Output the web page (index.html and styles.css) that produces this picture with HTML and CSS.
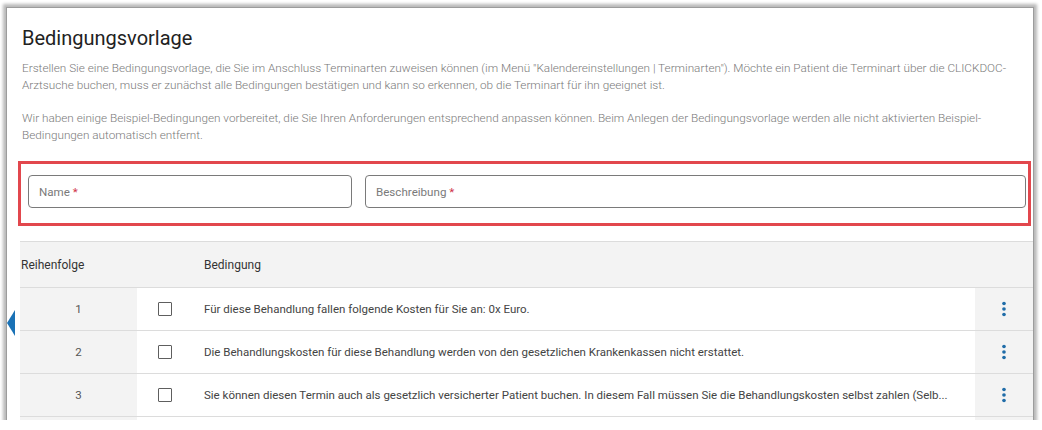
FILE: index.html
```html
<!DOCTYPE html>
<html lang="de">
<head>
<meta charset="utf-8">
<title>Bedingungsvorlage</title>
<link rel="stylesheet" href="styles.css">
</head>
<body>
<div class="panel">
  <span class="collapse-arrow"></span>
  <div class="intro">
    <h1 class="title">Bedingungsvorlage</h1>
    <p class="desc">Erstellen Sie eine Bedingungsvorlage, die Sie im Anschluss Terminarten zuweisen können (im Menü "Kalendereinstellungen | Terminarten"). Möchte ein Patient die Terminart über die CLICKDOC-Arztsuche buchen, muss er zunächst alle Bedingungen bestätigen und kann so erkennen, ob die Terminart für ihn geeignet ist.</p>
    <p class="desc">Wir haben einige Beispiel-Bedingungen vorbereitet, die Sie Ihren Anforderungen entsprechend anpassen können. Beim Anlegen der Bedingungsvorlage werden alle nicht aktivierten Beispiel-Bedingungen automatisch entfernt.</p>
  </div>
  <div class="highlight">
    <div class="field field-name"><span class="label">Name <span class="req">*</span></span></div>
    <div class="field field-desc"><span class="label">Beschreibung <span class="req">*</span></span></div>
  </div>
  <table class="conditions">
    <colgroup>
      <col class="c-order">
      <col class="c-check">
      <col class="c-text">
      <col class="c-menu">
    </colgroup>
    <thead>
      <tr>
        <th class="h-order">Reihenfolge</th>
        <th></th>
        <th>Bedingung</th>
        <th></th>
      </tr>
    </thead>
    <tbody>
      <tr>
        <td class="order">1</td>
        <td class="check"><span class="box"></span></td>
        <td class="text">Für diese Behandlung fallen folgende Kosten für Sie an: 0x Euro.</td>
        <td class="menu"><svg viewBox="0 0 24 24" width="22" height="22"><circle cx="12" cy="6" r="2"/><circle cx="12" cy="12" r="2"/><circle cx="12" cy="18" r="2"/></svg></td>
      </tr>
      <tr>
        <td class="order">2</td>
        <td class="check"><span class="box"></span></td>
        <td class="text">Die Behandlungskosten für diese Behandlung werden von den gesetzlichen Krankenkassen nicht erstattet.</td>
        <td class="menu"><svg viewBox="0 0 24 24" width="22" height="22"><circle cx="12" cy="6" r="2"/><circle cx="12" cy="12" r="2"/><circle cx="12" cy="18" r="2"/></svg></td>
      </tr>
      <tr>
        <td class="order">3</td>
        <td class="check"><span class="box"></span></td>
        <td class="text">Sie können diesen Termin auch als gesetzlich versicherter Patient buchen. In diesem Fall müssen Sie die Behandlungskosten selbst zahlen (Selb...</td>
        <td class="menu"><svg viewBox="0 0 24 24" width="22" height="22"><circle cx="12" cy="6" r="2"/><circle cx="12" cy="12" r="2"/><circle cx="12" cy="18" r="2"/></svg></td>
      </tr>
      <tr>
        <td class="order"></td>
        <td class="check"></td>
        <td class="text"></td>
        <td class="menu"></td>
      </tr>
    </tbody>
  </table>
</div>
</body>
</html>
```
FILE: styles.css
```css
html, body {
  margin: 0;
  padding: 0;
  background: #ffffff;
}

body {
  font-family: Roboto, "Liberation Sans", Arial, sans-serif;
  padding-top: 8px;
}

.panel {
  position: relative;
  margin: 0 9px 0 7px;
  height: 412px;
  overflow: hidden;
  background: #ffffff;
  box-shadow: 0 0 0 1px #9c9c9c, 0 0 3px 4px rgba(0, 0, 0, 0.28);
}

.collapse-arrow {
  position: absolute;
  left: 0;
  top: 302px;
  width: 0;
  height: 0;
  border-top: 13px solid transparent;
  border-bottom: 13px solid transparent;
  border-right: 8px solid #1a72b6;
}

.intro {
  padding: 18px 15px 0 15px;
}

.title {
  margin: 0;
  font-size: 20px;
  line-height: 24px;
  font-weight: 400;
  color: #222222;
}

.desc {
  margin: 10px 0 0 0;
  font-size: 11.75px;
  line-height: 17px;
  font-weight: 300;
  color: #7a7a7a;
}

.desc + .desc {
  margin-top: 16px;
}

.highlight {
  margin: 17px 2px 0 11px;
  border: 3px solid #e2474d;
  padding: 11px 2px 15px 7px;
  display: flex;
  gap: 13px;
}

.field {
  height: 31px;
  border: 1px solid #7a7a7a;
  border-radius: 4px;
  display: flex;
  align-items: center;
  padding-left: 10px;
  box-sizing: content-box;
}

.field-name {
  width: 312px;
}

.field-desc {
  flex: 1;
}

.label {
  font-size: 11.6px;
  color: #7a7a7a;
  font-weight: 400;
}

.req {
  color: #d0334a;
}

.conditions {
  margin: 15px 0 0 13px;
  width: 1013px;
  border-collapse: collapse;
  table-layout: fixed;
  font-size: 11.5px;
}

.c-order { width: 117px; }
.c-check { width: 67px; }
.c-menu { width: 58px; }

.conditions thead tr {
  background: #f3f3f3;
  border-top: 1px solid #dcdcdc;
  border-bottom: 1px solid #dcdcdc;
}

.conditions th {
  height: 45px;
  padding: 0;
  text-align: left;
  font-weight: 400;
  font-size: 12px;
  color: #333333;
}

.conditions th.h-order {
  padding-left: 1px;
}

.conditions tbody tr {
  border-bottom: 1px solid #dcdcdc;
}

.conditions td {
  height: 42px;
  padding: 0;
  vertical-align: middle;
}

.order {
  background: #f3f3f3;
  text-align: center;
  color: #555555;
}

.check {
  padding-left: 21px !important;
}

.box {
  display: block;
  width: 12px;
  height: 12px;
  border: 1px solid #5e5e5e;
  border-radius: 1px;
}

.text {
  color: #444444;
  white-space: nowrap;
  overflow: hidden;
  text-overflow: clip;
}

.menu {
  background: #f3f3f3;
  text-align: center;
}

.menu svg {
  display: block;
  margin: 0 auto;
  fill: #1f6ca8;
}
```
